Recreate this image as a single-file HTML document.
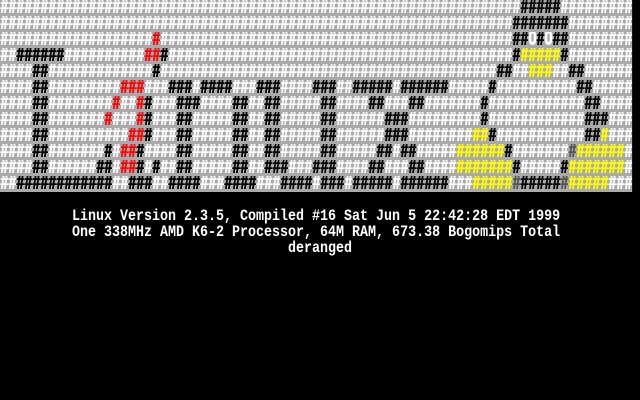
<!DOCTYPE html>
<html><head><style>
html,body{margin:0;padding:0;background:#000;width:640px;height:400px;overflow:hidden}
#logo{position:absolute;left:0;top:0;width:1100px;transform:scaleX(0.60606);transform-origin:0 0}
#txt{position:absolute;left:0;top:0;width:768px;transform:scaleX(0.83333);transform-origin:0 0}
pre{margin:0;font-family:"Liberation Mono",monospace;font-weight:bold;white-space:pre;color:#fff}
#logo pre{font-size:22px;line-height:16px;text-shadow:1.2px 0 currentColor}
#logo div{background:#aaa;width:1042.8px;height:16px;overflow:hidden}
#txt pre{font-size:16px;line-height:16px}
.k{color:#000}.r{color:#f00}.y{color:#ff0}.g{color:#555}
</style></head><body>
<div id="logo"><pre><div>#################################################################<span class="k">#####</span>#########</div><div>################################################################<span class="k">#######</span>########</div><div>###################<span class="r">#</span>############################################<span class="k">##</span>O<span class="k">#</span>O<span class="k">##</span>########</div><div>##<span class="k">######</span>##########<span class="r">##</span><span class="k">#</span>###########################################<span class="k">#</span><span class="y">#####</span><span class="k">#</span>########</div><div>####<span class="k">##</span>#############<span class="k">#</span>##########################################<span class="k">##</span>##<span class="y">###</span>##<span class="k">##</span>######</div><div>####<span class="k">##</span>#########<span class="r">###</span>###<span class="k">###</span>#<span class="k">####</span>###<span class="k">###</span>####<span class="k">###</span>##<span class="k">#####</span>#<span class="k">######</span>#####<span class="k">#</span>##########<span class="k">##</span>#####</div><div>####<span class="k">##</span>########<span class="r">#</span>##<span class="r">#</span><span class="k">#</span>###<span class="k">###</span>####<span class="k">##</span>##<span class="k">##</span>#####<span class="k">##</span>####<span class="k">##</span>###<span class="k">##</span>#######<span class="k">#</span>############<span class="k">##</span>####</div><div>####<span class="k">##</span>#######<span class="r">#</span>###<span class="r">#</span><span class="k">#</span>###<span class="k">##</span>#####<span class="k">##</span>##<span class="k">##</span>#####<span class="k">##</span>######<span class="k">###</span>#########<span class="k">#</span>############<span class="k">###</span>###</div><div>####<span class="k">##</span>##########<span class="r">##</span><span class="k">#</span>###<span class="k">##</span>#####<span class="k">##</span>##<span class="k">##</span>#####<span class="k">##</span>######<span class="k">###</span>########<span class="y">##</span><span class="k">#</span>###########<span class="k">##</span><span class="y">#</span>###</div><div>####<span class="k">##</span>#######<span class="k">#</span>#<span class="r">##</span><span class="k">#</span>####<span class="k">##</span>#####<span class="k">##</span>##<span class="k">##</span>#####<span class="k">##</span>#####<span class="k">##</span>#<span class="k">##</span>#####<span class="y">######</span><span class="k">#</span>#######<span class="g">#</span><span class="y">######</span>#</div><div>####<span class="k">##</span>######<span class="k">##</span>#<span class="r">##</span><span class="k">#</span>#<span class="k">#</span>##<span class="k">##</span>#####<span class="k">##</span>##<span class="k">###</span>###<span class="k">###</span>####<span class="k">##</span>###<span class="k">##</span>####<span class="y">#######</span><span class="k">#</span>#####<span class="k">#</span><span class="y">#######</span>#</div><div>##<span class="k">############</span>##<span class="k">###</span>##<span class="k">####</span>###<span class="k">####</span>###<span class="k">####</span>#<span class="k">###</span>#<span class="k">#####</span>#<span class="k">######</span>###<span class="y">#####</span><span class="g">#</span><span class="k">#####</span><span class="g">#</span><span class="y">#####</span>###</div></pre></div>
<div id="txt"><pre>













         Linux Version 2.3.5, Compiled #16 Sat Jun 5 22:42:28 EDT 1999
         One 338MHz AMD K6-2 Processor, 64M RAM, 673.38 Bogomips Total
                                    deranged</pre></div>
</body></html>
